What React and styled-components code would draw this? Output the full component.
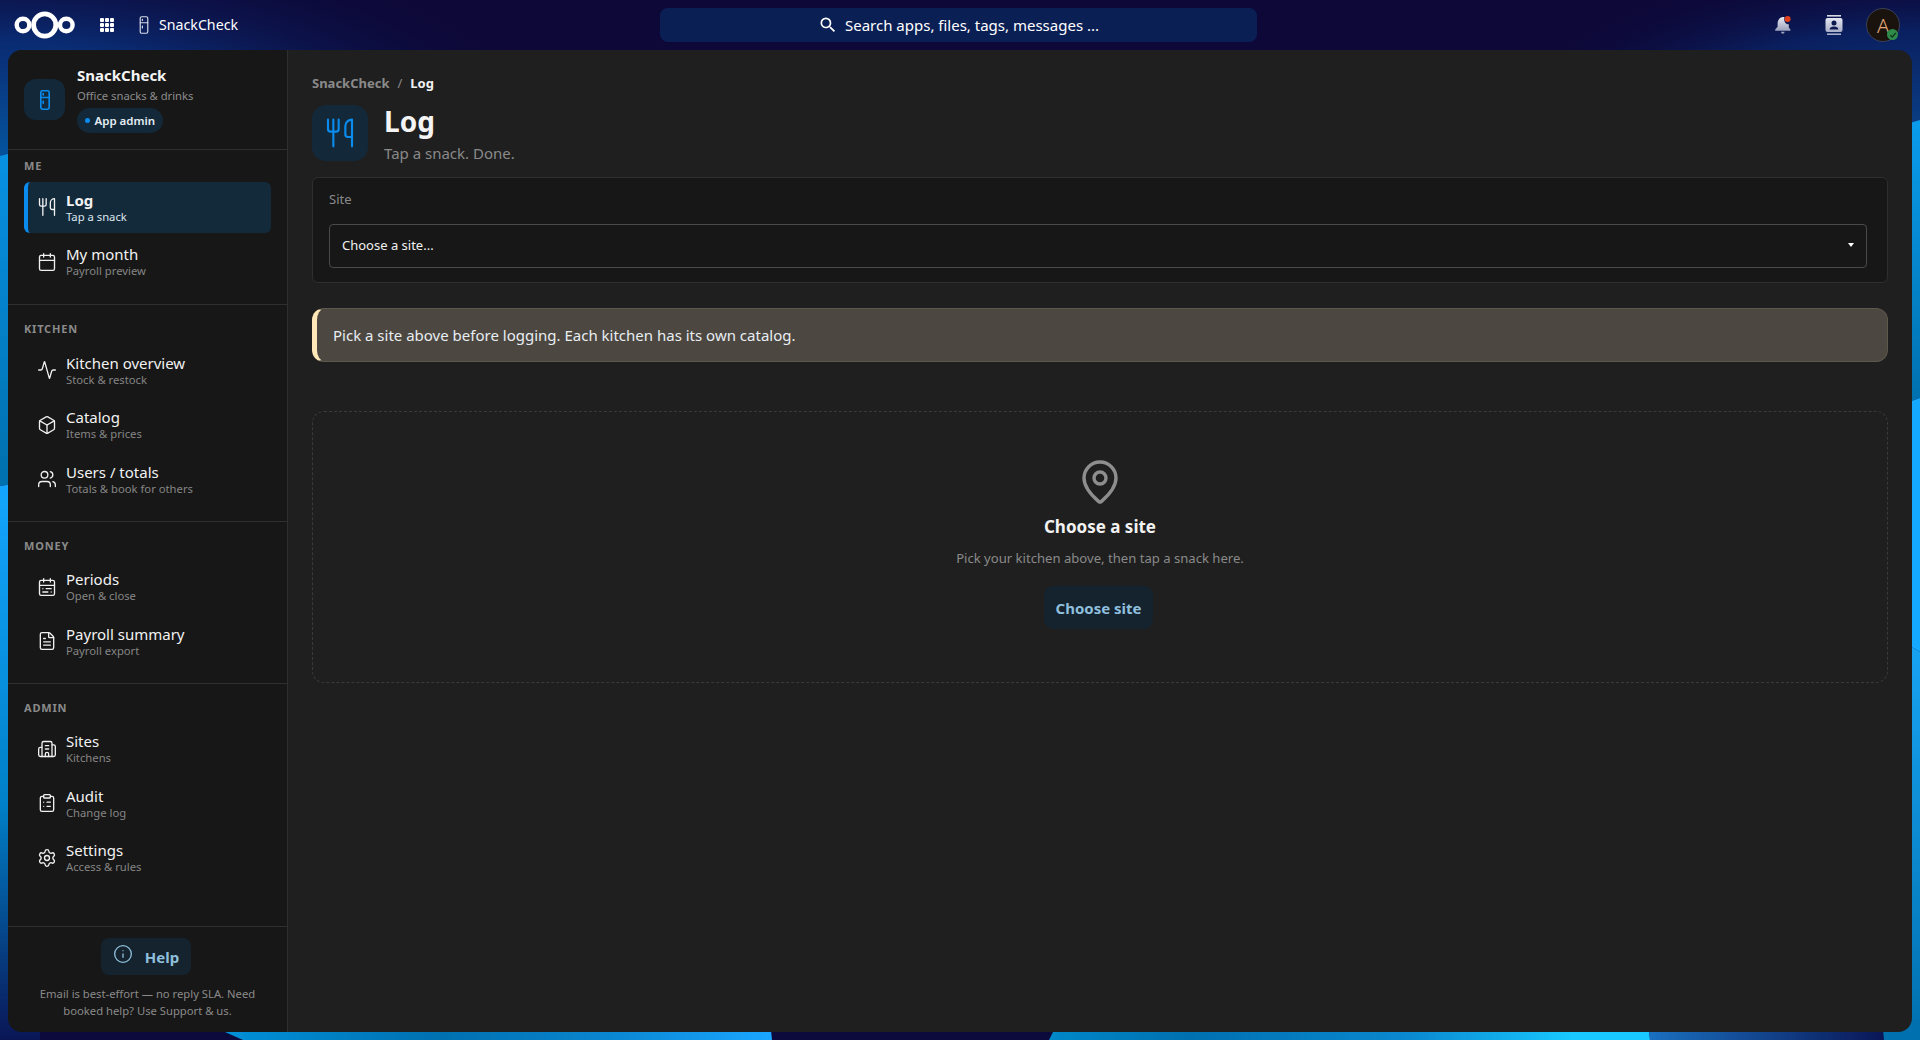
import React from 'react';
import styled, { createGlobalStyle } from 'styled-components';
import {
  Utensils, Calendar, Activity, Box, Users, CalendarRange, FileText, Building2,
  ClipboardList, Settings, Info, MapPin,
} from 'lucide-react';

const Global = createGlobalStyle`
  html, body { margin: 0; padding: 0; height: 100%; background: #0c0838; }
  #root { height: 100%; }
  * { box-sizing: border-box; }
  body { font-family: "Noto Sans", "Liberation Sans", sans-serif; color: #f0f0f0; }
`;

const Page = styled.div`
  position: relative; width: 100%; height: 100vh; overflow: hidden;
  display: flex; flex-direction: column;
`;
const BackdropSvg = styled.svg`
  position: absolute; inset: 0; width: 100%; height: 100%; z-index: 0;
`;
const TopBar = styled.header`
  position: relative; z-index: 1; flex: 0 0 50px; display: grid;
  grid-template-columns: 646px 597px 1fr; align-items: center; padding: 0 20px 0 14px;
`;
const TopLeft = styled.div`display: flex; align-items: center;`;
const TopRight = styled.div`display: flex; align-items: center; justify-content: flex-end;`;
const AppsButton = styled.span`
  display: grid; grid-template-columns: repeat(3, 4px); gap: 1px; margin-left: 24px; margin-right: 25px;
  span { width: 4px; height: 4px; background: #fff; border-radius: 1px; }
`;
const AppName = styled.span`font-size: 14.2px; color: #fff; margin-left: 10px; line-height: 20px;`;
const SearchBox = styled.div`
  height: 34px; border-radius: 8px; background: #0a1f54; display: flex;
  align-items: center; justify-content: center; gap: 7px; color: #fff; font-size: 15px;
`;
const Window = styled.div`
  position: relative; z-index: 1; flex: 1; min-height: 0; margin: 0 8px 8px; display: flex;
  border-radius: 14px; overflow: hidden; background: #1f1f1f;
`;
const Sidebar = styled.aside`
  width: 280px; flex: none; background: #171717; border-right: 1px solid #2f2f2f;
  display: flex; flex-direction: column;
`;
const Brand = styled.div`
  height: 100px; flex: none; border-bottom: 1px solid #2f2f2f; display: flex; align-items: center;
  padding: 0 16px; gap: 12px;
`;
const BrandIcon = styled.div`
  width: 41px; height: 41px; border-radius: 12px; background: #13293a; display: flex;
  align-items: center; justify-content: center; flex: none;
`;
const BrandText = styled.div`display: flex; flex-direction: column; align-items: flex-start;`;
const BrandName = styled.div`
  font-size: 15px; font-weight: 700; line-height: 20px; color: #f4f4f4; margin: -1px 0 1px;
`;
const BrandSub = styled.div`font-size: 11.25px; line-height: 16px; margin-top: 2px; color: #8c8c8c;`;
const Badge = styled.div`
  display: inline-flex; align-items: center; gap: 4.5px; height: 25px; padding: 0 8px;
  margin-top: 4px; border-radius: 13px; background: #13293a; font-size: 11.5px; font-weight: 600; color: #e6eef4;
`;
const BadgeDot = styled.span`width: 5px; height: 5px; border-radius: 50%; background: #0a8cee;`;
const Nav = styled.nav`flex: 1; min-height: 0;`;
const Section = styled.section`
  padding: 8px 16px 17px;
  border-bottom: ${p => (p.$last ? 'none' : '1px solid #2f2f2f')};
  & + & { padding-top: 16px; padding-bottom: 16px; }
`;
const SectionLabel = styled.div`
  font-size: 11px; font-weight: 700; letter-spacing: 0.8px; line-height: 16px; color: #8a8a8a;
  margin-bottom: 8px;
`;
const Items = styled.div`display: flex; flex-direction: column; gap: 4px;`;
const Item = styled.div`
  height: 50.5px; display: flex; align-items: center; gap: 9px; padding-left: ${p => (p.$active ? '9px' : '13px')};
  border-radius: 6px; color: #f0f0f0;
  background: ${p => (p.$active ? '#132a3b' : 'transparent')};
  border-left: ${p => (p.$active ? '4px solid #0a8cee' : 'none')};
  svg { flex: none; }
`;
const ItemText = styled.div`display: flex; flex-direction: column;`;
const ItemLabel = styled.div`
  font-size: 15px; line-height: 18px; font-weight: ${p => (p.$active ? 700 : 400)}; color: #f2f2f2;
`;
const ItemSub = styled.div`
  font-size: 11.25px; line-height: 15px; color: ${p => (p.$active ? '#dde7ee' : '#858585')};
`;
const Footer = styled.footer`
  flex: none; height: 106px; border-top: 1px solid #2f2f2f; padding: 11px 16px 0; display: flex;
  flex-direction: column; align-items: center;
`;
const HelpButton = styled.div`
  width: 90px; height: 37px; border-radius: 8px; background: #14232e; color: #8fbfdc; display: flex;
  align-items: center; justify-content: center; gap: 12px; font-size: 15px; font-weight: 700; margin-right: 3px;
  svg { position: relative; top: -3px; }
`;
const FooterNote = styled.p`
  margin: 10px 0 0; font-size: 11.25px; line-height: 17px; text-align: center; color: #8a8a8a;
`;
const Main = styled.main`flex: 1; min-width: 0; padding: 24px 24px 0 24px; display: flex; flex-direction: column;`;
const Crumbs = styled.div`
  display: flex; align-items: center; gap: 8px; font-size: 13px; font-weight: 700; line-height: 18px; color: #8a8a8a;
`;
const CrumbSep = styled.span`font-weight: 400;`;
const CrumbNow = styled.span`color: #f2f2f2;`;
const PageHead = styled.div`display: flex; align-items: flex-start; gap: 16px; margin-top: 13px; height: 56px;`;
const PageIcon = styled.div`
  width: 56px; height: 56px; border-radius: 14px; background: #13293a; display: flex;
  align-items: center; justify-content: center; color: #0a8cee; flex: none;
`;
const PageText = styled.div`display: flex; flex-direction: column; margin-top: -2px;`;
const PageTitle = styled.h1`margin: 0; font-size: 28px; font-weight: 700; line-height: 36px; color: #f4f4f4;`;
const PageSub = styled.div`font-size: 15px; line-height: 20px; color: #8a8a8a; margin-top: 4px;`;
const Card = styled.div`
  margin-top: 16px; height: 106px; border: 1px solid #2f2f2f; border-radius: 6px; background: #171717;
  padding: 11px 20px 0 16px;
`;
const FieldLabel = styled.div`font-size: 13px; line-height: 20px; color: #8a8a8a;`;
const SelectBox = styled.div`
  margin-top: 15px; height: 44px; border: 1px solid #4a4a4a; border-radius: 4px; display: flex;
  align-items: center; justify-content: space-between; padding: 0 12px 2px 12px; font-size: 13px; color: #f0f0f0;
`;
const Caret = styled.span`
  width: 0; height: 0; border-left: 3.5px solid transparent; border-right: 3.5px solid transparent;
  border-top: 4px solid #fff;
`;
const Notice = styled.div`
  margin-top: 25px; height: 54px; border-radius: 12px; background: #4c4740; border: 1px solid #5d584c;
  border-left: 5px solid #ffe8b8; display: flex; align-items: center; padding-left: 16px;
  font-size: 15px; color: #e8eef2;
`;
const Empty = styled.div`
  margin-top: 49px; height: 272px; border: 1px dashed #3a3a3a; border-radius: 12px; display: flex;
  flex-direction: column; align-items: center; padding-top: 46px; color: #8e8e8e;
`;
const EmptyTitle = styled.div`font-size: 17px; font-weight: 700; line-height: 24px; color: #f2f2f2; margin-top: 9px;`;
const EmptySub = styled.div`font-size: 13.1px; line-height: 18px; color: #8a8a8a; margin-top: 10px;`;
const ActionButton = styled.div`
  margin-top: 19px; margin-right: 3px; width: 109px; height: 43px; border-radius: 9px; background: #14232e;
  color: #8fbfdc; font-size: 15px; font-weight: 700; display: flex; align-items: center; justify-content: center;
`;
const BellSlot = styled.span`display: inline-flex; margin-right: 33px;`;
const ContactsSlot = styled.span`display: inline-flex; margin-right: 23px;`;
const Avatar = styled.div`
  position: relative; width: 34px; height: 34px; border-radius: 50%; background: #1a120c; border: 1px solid #3a4058;
  display: flex; align-items: center; justify-content: center; color: #e4a878; font-size: 20px; font-weight: 300;
`;
const StatusDot = styled.span`
  position: absolute; right: 1px; bottom: 1px; width: 11px; height: 11px; border-radius: 50%;
  background: #2e8b4a; display: flex; align-items: center; justify-content: center;
`;

const Backdrop = () => (
  <BackdropSvg viewBox="0 0 1920 1040" preserveAspectRatio="none" aria-hidden="true">
    <defs>
      <linearGradient id="bBase" x1="0" y1="0" x2="0" y2="1">
        <stop offset="0" stopColor="#0d0838" />
        <stop offset="1" stopColor="#0c0a3c" />
      </linearGradient>
      <radialGradient id="bLeft" gradientUnits="userSpaceOnUse" cx="0" cy="150" r="560" gradientTransform="translate(0 90) scale(1 0.4)">
        <stop offset="0" stopColor="#05529c" />
        <stop offset="0.5" stopColor="#0a2a70" />
        <stop offset="1" stopColor="#0c0a3c" stopOpacity="0" />
      </radialGradient>
      <radialGradient id="bRight" gradientUnits="userSpaceOnUse" cx="1920" cy="130" r="420" gradientTransform="translate(0 78) scale(1 0.4)">
        <stop offset="0" stopColor="#0a3f86" />
        <stop offset="0.6" stopColor="#0a1f5f" />
        <stop offset="1" stopColor="#0c0a3c" stopOpacity="0" />
      </radialGradient>
      <linearGradient id="bL1" x1="0" y1="0" x2="0" y2="1">
        <stop offset="0" stopColor="#0892e4" />
        <stop offset="1" stopColor="#0070ae" />
      </linearGradient>
      <linearGradient id="bL2" x1="0" y1="0" x2="0" y2="1">
        <stop offset="0" stopColor="#14a6ff" />
        <stop offset="0.58" stopColor="#0080c8" />
        <stop offset="1" stopColor="#0a1656" />
      </linearGradient>
      <linearGradient id="bR1" x1="0" y1="0" x2="0" y2="1">
        <stop offset="0" stopColor="#0a9cec" />
        <stop offset="1" stopColor="#0070ae" />
      </linearGradient>
      <linearGradient id="bR3" x1="0" y1="0" x2="0" y2="1">
        <stop offset="0" stopColor="#18a4f4" />
        <stop offset="1" stopColor="#0070ae" />
      </linearGradient>
      <linearGradient id="bB1" gradientUnits="userSpaceOnUse" x1="224" y1="0" x2="771" y2="0">
        <stop offset="0" stopColor="#0090d8" />
        <stop offset="0.4" stopColor="#0070b0" />
        <stop offset="0.7" stopColor="#0a86d0" />
        <stop offset="1" stopColor="#1aa6ff" />
      </linearGradient>
      <linearGradient id="bB2" gradientUnits="userSpaceOnUse" x1="1050" y1="0" x2="1650" y2="0">
        <stop offset="0" stopColor="#0088c8" />
        <stop offset="0.23" stopColor="#0070b0" />
        <stop offset="0.6" stopColor="#0a88d0" />
        <stop offset="0.87" stopColor="#18c8ff" />
        <stop offset="1" stopColor="#18c8ff" />
      </linearGradient>
      <linearGradient id="bB3" gradientUnits="userSpaceOnUse" x1="1648" y1="0" x2="1884" y2="0">
        <stop offset="0" stopColor="#1a70c0" />
        <stop offset="1" stopColor="#0a1656" />
      </linearGradient>
    </defs>
    <rect width="1920" height="1040" fill="url(#bBase)" />
    <rect width="960" height="400" fill="url(#bLeft)" />
    <rect x="960" width="960" height="400" fill="url(#bRight)" />
    <polygon points="0,156 40,146 40,480 0,486" fill="url(#bL1)" />
    <polygon points="0,486 40,480 40,1040 0,1040" fill="url(#bL2)" />
    <polygon points="1900,126 1920,120 1920,398 1900,405" fill="url(#bR1)" />
    <polygon points="1900,405 1920,398 1920,652 1900,640" fill="#14a8ff" />
    <polygon points="1900,640 1920,652 1920,1040 1900,1040" fill="url(#bR3)" />
    <polygon points="198,1020 770,1020 772,1040 243,1040" fill="url(#bB1)" />
    <polygon points="1059,1020 1648,1020 1650,1040 1049,1040" fill="url(#bB2)" />
    <polygon points="1648,1020 1882,1020 1884,1040 1650,1040" fill="url(#bB3)" />
    <polygon points="1882,1020 1920,1020 1920,1040 1884,1040" fill="#0070ae" />
  </BackdropSvg>
);

const NextcloudLogo = () => (
  <svg width="62" height="28" viewBox="0 0 62 28" fill="none" stroke="#fff">
    <circle cx="9" cy="14" r="6.3" strokeWidth="4.4" />
    <circle cx="30.7" cy="14" r="11.1" strokeWidth="4.8" />
    <circle cx="52.3" cy="14" r="6.3" strokeWidth="4.4" />
  </svg>
);

const SearchGlyph = () => (
  <svg width="20" height="20" viewBox="0 0 24 24" fill="#fff">
    <path d="M15.5 14h-.79l-.28-.27A6.471 6.471 0 0 0 16 9.5 6.5 6.5 0 1 0 9.5 16c1.61 0 3.09-.59 4.23-1.57l.27.28v.79l5 4.99L20.49 19l-4.99-5zm-6 0C7.01 14 5 11.99 5 9.5S7.01 5 9.5 5 14 7.01 14 9.5 11.99 14 9.5 14z" />
  </svg>
);

const FridgeIcon = ({ width, height, color, sw }) => (
  <svg width={width} height={height} viewBox="0 0 10 20" fill="none" stroke={color} strokeWidth={sw} strokeLinecap="round">
    <rect x="0.8" y="0.8" width="8.4" height="18.4" rx="1.6" />
    <path d="M0.8 7.5h8.4M3.2 3.6v1.4M3.2 11.2v2" />
  </svg>
);

const BellIcon = () => (
  <svg width="18" height="20" viewBox="0 0 18 20">
    <defs>
      <linearGradient id="bellFill" x1="0" y1="0" x2="0" y2="1">
        <stop offset="0" stopColor="#e8eaf2" />
        <stop offset="1" stopColor="#9aa0bc" />
      </linearGradient>
    </defs>
    <path d="M10.5 2.2C6.5 1.6 3.6 4.4 3.6 8.4v3.4L1.2 14.6v1.2h15.2v-1.2l-1.6-2.2V9.2c-3 .2-5.4-3-4.3-7Z" fill="url(#bellFill)" />
    <path d="M7 16.8h3.6c0 1.2-.8 1.9-1.8 1.9S7 18 7 16.8Z" fill="#9aa0bc" />
    <circle cx="13.6" cy="4" r="3" fill="#e2401c" />
  </svg>
);

const ContactsIcon = () => (
  <svg width="18" height="20" viewBox="0 0 18 20">
    <defs>
      <linearGradient id="cFill" x1="0" y1="0" x2="0" y2="1">
        <stop offset="0" stopColor="#e4e6f0" />
        <stop offset="1" stopColor="#a8aec8" />
      </linearGradient>
    </defs>
    <rect x="2" y="0" width="14" height="1.6" fill="#d8dbe6" />
    <rect x="0.5" y="3" width="17" height="14" rx="2" fill="url(#cFill)" />
    <rect x="2" y="18.4" width="14" height="1.6" fill="#a8aec8" />
    <circle cx="9" cy="8" r="2.5" fill="#0c1a50" />
    <path d="M4.6 14.6c.3-2.2 2-3 4.4-3s4.1.8 4.4 3Z" fill="#0c1a50" />
  </svg>
);

const groups = [
  { label: 'ME', items: [
    { icon: Utensils, label: 'Log', sub: 'Tap a snack', active: true },
    { icon: Calendar, label: 'My month', sub: 'Payroll preview' },
  ] },
  { label: 'KITCHEN', items: [
    { icon: Activity, label: 'Kitchen overview', sub: 'Stock & restock' },
    { icon: Box, label: 'Catalog', sub: 'Items & prices' },
    { icon: Users, label: 'Users / totals', sub: 'Totals & book for others' },
  ] },
  { label: 'MONEY', items: [
    { icon: CalendarRange, label: 'Periods', sub: 'Open & close' },
    { icon: FileText, label: 'Payroll summary', sub: 'Payroll export' },
  ] },
  { label: 'ADMIN', last: true, items: [
    { icon: Building2, label: 'Sites', sub: 'Kitchens' },
    { icon: ClipboardList, label: 'Audit', sub: 'Change log' },
    { icon: Settings, label: 'Settings', sub: 'Access & rules' },
  ] },
];

export default function App() {
  return (
    <Page>
      <Global />
      <Backdrop />
      <TopBar>
        <TopLeft>
          <NextcloudLogo />
          <AppsButton>
            {Array.from({ length: 9 }, (_, i) => <span key={i} />)}
          </AppsButton>
          <FridgeIcon width={10} height={18} color="#d8dce8" sw={1.3} />
          <AppName>SnackCheck</AppName>
        </TopLeft>
        <SearchBox>
          <SearchGlyph />
          Search apps, files, tags, messages ...
        </SearchBox>
        <TopRight>
          <BellSlot><BellIcon /></BellSlot>
          <ContactsSlot><ContactsIcon /></ContactsSlot>
          <Avatar>
            A
            <StatusDot>
              <svg width="8" height="8" viewBox="0 0 8 8" fill="none" stroke="#12361f" strokeWidth="1.3">
                <path d="M1.2 4.2 3.2 6 6.8 2" />
              </svg>
            </StatusDot>
          </Avatar>
        </TopRight>
      </TopBar>
      <Window>
        <Sidebar>
          <Brand>
            <BrandIcon><FridgeIcon width={10} height={20} color="#0a8cee" sw={1.6} /></BrandIcon>
            <BrandText>
              <BrandName>SnackCheck</BrandName>
              <BrandSub>Office snacks &amp; drinks</BrandSub>
              <Badge><BadgeDot />App admin</Badge>
            </BrandText>
          </Brand>
          <Nav>
            {groups.map(g => (
              <Section key={g.label} $last={g.last}>
                <SectionLabel>{g.label}</SectionLabel>
                <Items>
                  {g.items.map(it => {
                    const Icon = it.icon;
                    return (
                      <Item key={it.label} $active={it.active}>
                        <Icon size={20} strokeWidth={1.6} />
                        <ItemText>
                          <ItemLabel $active={it.active}>{it.label}</ItemLabel>
                          <ItemSub $active={it.active}>{it.sub}</ItemSub>
                        </ItemText>
                      </Item>
                    );
                  })}
                </Items>
              </Section>
            ))}
          </Nav>
          <Footer>
            <HelpButton><Info size={20} strokeWidth={1.6} /><span>Help</span></HelpButton>
            <FooterNote>Email is best-effort — no reply SLA. Need booked help? Use Support &amp; us.</FooterNote>
          </Footer>
        </Sidebar>
        <Main>
          <Crumbs>SnackCheck <CrumbSep>/</CrumbSep> <CrumbNow>Log</CrumbNow></Crumbs>
          <PageHead>
            <PageIcon><Utensils size={32} strokeWidth={1.6} /></PageIcon>
            <PageText>
              <PageTitle>Log</PageTitle>
              <PageSub>Tap a snack. Done.</PageSub>
            </PageText>
          </PageHead>
          <Card>
            <FieldLabel>Site</FieldLabel>
            <SelectBox>Choose a site...<Caret /></SelectBox>
          </Card>
          <Notice>Pick a site above before logging. Each kitchen has its own catalog.</Notice>
          <Empty>
            <MapPin size={48} strokeWidth={1.7} />
            <EmptyTitle>Choose a site</EmptyTitle>
            <EmptySub>Pick your kitchen above, then tap a snack here.</EmptySub>
            <ActionButton>Choose site</ActionButton>
          </Empty>
        </Main>
      </Window>
    </Page>
  );
}
